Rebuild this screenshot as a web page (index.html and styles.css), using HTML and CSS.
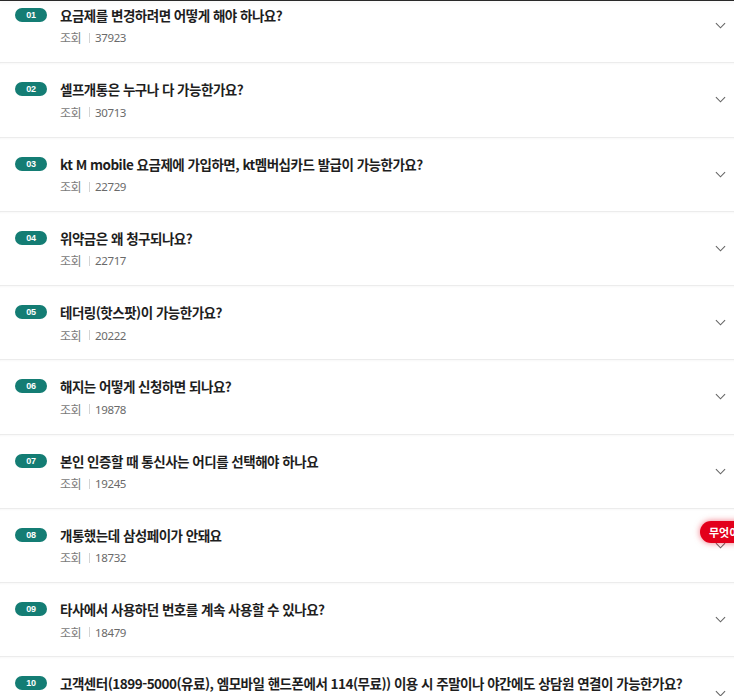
FILE: index.html
```html
<!DOCTYPE html>
<html lang="ko">
<head>
<meta charset="utf-8">
<link rel="stylesheet" href="styles.css">
</head>
<body>
<div class="topbar"></div>
<ul class="faq">
  <li class="row first">
    <div class="content">
      <div class="q"><span class="badge">01</span><span class="title">요금제를 변경하려면 어떻게 해야 하나요?</span></div>
      <div class="meta"><span class="lbl">조회</span><span class="sep"></span><span class="num">37923</span></div>
    </div>
    <svg class="chev" viewBox="0 0 12 7"><path d="M1 1l5 5 5-5"/></svg>
  </li>
  <li class="row">
    <div class="content">
      <div class="q"><span class="badge">02</span><span class="title">셀프개통은 누구나 다 가능한가요?</span></div>
      <div class="meta"><span class="lbl">조회</span><span class="sep"></span><span class="num">30713</span></div>
    </div>
    <svg class="chev" viewBox="0 0 12 7"><path d="M1 1l5 5 5-5"/></svg>
  </li>
  <li class="row">
    <div class="content">
      <div class="q"><span class="badge">03</span><span class="title">kt M mobile 요금제에 가입하면, kt멤버십카드 발급이 가능한가요?</span></div>
      <div class="meta"><span class="lbl">조회</span><span class="sep"></span><span class="num">22729</span></div>
    </div>
    <svg class="chev" viewBox="0 0 12 7"><path d="M1 1l5 5 5-5"/></svg>
  </li>
  <li class="row">
    <div class="content">
      <div class="q"><span class="badge">04</span><span class="title">위약금은 왜 청구되나요?</span></div>
      <div class="meta"><span class="lbl">조회</span><span class="sep"></span><span class="num">22717</span></div>
    </div>
    <svg class="chev" viewBox="0 0 12 7"><path d="M1 1l5 5 5-5"/></svg>
  </li>
  <li class="row">
    <div class="content">
      <div class="q"><span class="badge">05</span><span class="title">테더링(핫스팟)이 가능한가요?</span></div>
      <div class="meta"><span class="lbl">조회</span><span class="sep"></span><span class="num">20222</span></div>
    </div>
    <svg class="chev" viewBox="0 0 12 7"><path d="M1 1l5 5 5-5"/></svg>
  </li>
  <li class="row">
    <div class="content">
      <div class="q"><span class="badge">06</span><span class="title">해지는 어떻게 신청하면 되나요?</span></div>
      <div class="meta"><span class="lbl">조회</span><span class="sep"></span><span class="num">19878</span></div>
    </div>
    <svg class="chev" viewBox="0 0 12 7"><path d="M1 1l5 5 5-5"/></svg>
  </li>
  <li class="row">
    <div class="content">
      <div class="q"><span class="badge">07</span><span class="title">본인 인증할 때 통신사는 어디를 선택해야 하나요</span></div>
      <div class="meta"><span class="lbl">조회</span><span class="sep"></span><span class="num">19245</span></div>
    </div>
    <svg class="chev" viewBox="0 0 12 7"><path d="M1 1l5 5 5-5"/></svg>
  </li>
  <li class="row">
    <div class="content">
      <div class="q"><span class="badge">08</span><span class="title">개통했는데 삼성페이가 안돼요</span></div>
      <div class="meta"><span class="lbl">조회</span><span class="sep"></span><span class="num">18732</span></div>
    </div>
    <svg class="chev" viewBox="0 0 12 7"><path d="M1 1l5 5 5-5"/></svg>
  </li>
  <li class="row">
    <div class="content">
      <div class="q"><span class="badge">09</span><span class="title">타사에서 사용하던 번호를 계속 사용할 수 있나요?</span></div>
      <div class="meta"><span class="lbl">조회</span><span class="sep"></span><span class="num">18479</span></div>
    </div>
    <svg class="chev" viewBox="0 0 12 7"><path d="M1 1l5 5 5-5"/></svg>
  </li>
  <li class="row">
    <div class="content">
      <div class="q"><span class="badge">10</span><span class="title">고객센터(1899-5000(유료), 엠모바일 핸드폰에서 114(무료)) 이용 시 주말이나 야간에도 상담원 연결이 가능한가요?</span></div>
      <div class="meta"><span class="lbl">조회</span><span class="sep"></span><span class="num">18011</span></div>
    </div>
    <svg class="chev" viewBox="0 0 12 7"><path d="M1 1l5 5 5-5"/></svg>
  </li>
</ul>
<div class="bubble">무엇이든 물어보세요</div>
</body>
</html>
```

FILE: styles.css
```css
html, body {
  margin: 0;
  padding: 0;
  background: #fff;
  overflow: hidden;
  height: 696px;
}
body {
  font-family: "Noto Sans CJK KR", "Noto Sans", sans-serif;
  color: #222;
}
.topbar {
  position: fixed;
  top: 0;
  left: 0;
  right: 0;
  height: 1px;
  background: #2a2a2a;
  box-shadow: 0 1px 5px rgba(0,0,0,0.12);
  z-index: 5;
}
.faq {
  list-style: none;
  margin: -12px 0 0 0;
  padding: 0;
}
.row {
  display: flex;
  align-items: center;
  justify-content: space-between;
  height: 74.25px;
  box-sizing: border-box;
  border-top: 1px solid #ececec;
  box-shadow: inset 0 2px 2px -1px rgba(0,0,0,0.03);
  padding: 0 8px 0 15px;
}
.row.first {
  border-top: none;
}
.content {
  display: flex;
  flex-direction: column;
  gap: 5px;
}
.q {
  display: flex;
  align-items: center;
  height: 20px;
}
.badge {
  display: inline-flex;
  align-items: center;
  justify-content: center;
  width: 32px;
  height: 14px;
  border-radius: 7px;
  background: #147d74;
  color: #fff;
  font-family: "Liberation Sans", sans-serif;
  font-weight: 700;
  font-size: 9px;
  letter-spacing: -0.2px;
  margin-right: 13px;
}
.title {
  font-size: 13.5px;
  font-weight: 700;
  letter-spacing: -0.5px;
  color: #1e1e1e;
  white-space: nowrap;
}
.meta {
  display: flex;
  align-items: center;
  height: 16px;
  padding-left: 45px;
  font-size: 12px;
  color: #7a7a7a;
}
.lbl {
  letter-spacing: -0.5px;
}
.sep {
  width: 1px;
  height: 10px;
  background: #d4d4d4;
  margin: 0 5px 0 8px;
}
.num {
  font-family: "Noto Sans", sans-serif;
  font-size: 11.5px;
  letter-spacing: -0.4px;
  color: #6a6a6a;
}
.chev {
  width: 11px;
  height: 7px;
  flex: none;
  fill: none;
  stroke: #666;
  stroke-width: 1.2;
}
.bubble {
  position: absolute;
  left: 700px;
  top: 521px;
  height: 22px;
  line-height: 22px;
  padding: 0 9px;
  border-radius: 11px;
  background: #e3001b;
  color: #fff;
  font-size: 11px;
  font-weight: 700;
  white-space: nowrap;
  box-shadow: 0 0 6px rgba(227,0,27,0.55);
  z-index: 6;
}
```
